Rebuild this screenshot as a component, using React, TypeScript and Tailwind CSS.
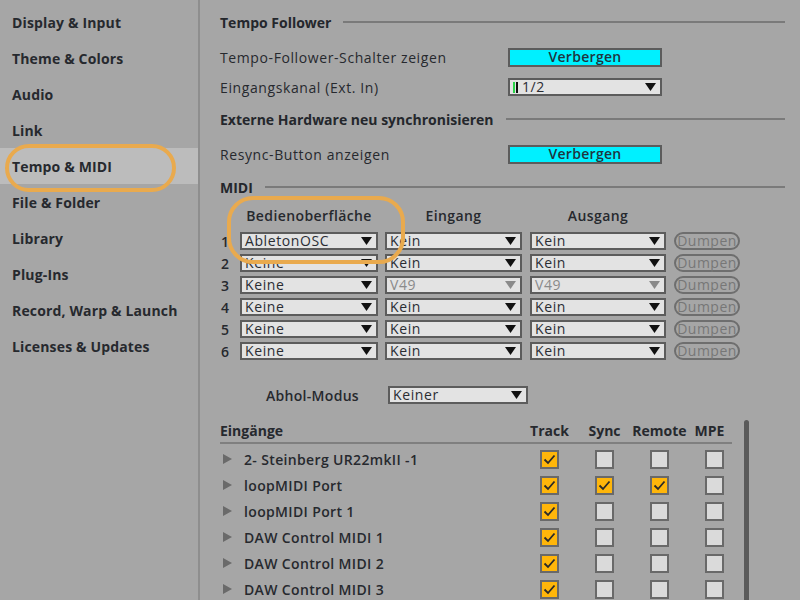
import React from "react";

const navItems = [
  "Display & Input",
  "Theme & Colors",
  "Audio",
  "Link",
  "Tempo & MIDI",
  "File & Folder",
  "Library",
  "Plug-Ins",
  "Record, Warp & Launch",
  "Licenses & Updates",
];

const midiRows = [
  { surface: "AbletonOSC", input: "Kein", output: "Kein", off: false },
  { surface: "Keine", input: "Kein", output: "Kein", off: false },
  { surface: "Keine", input: "V49", output: "V49", off: true },
  { surface: "Keine", input: "Kein", output: "Kein", off: false },
  { surface: "Keine", input: "Kein", output: "Kein", off: false },
  { surface: "Keine", input: "Kein", output: "Kein", off: false },
];

const ports = [
  { name: "2- Steinberg UR22mkII -1", checks: [true, false, false, false] },
  { name: "loopMIDI Port", checks: [true, true, true, false] },
  { name: "loopMIDI Port 1", checks: [true, false, false, false] },
  { name: "DAW Control MIDI 1", checks: [true, false, false, false] },
  { name: "DAW Control MIDI 2", checks: [true, false, false, false] },
  { name: "DAW Control MIDI 3", checks: [true, false, false, false] },
];

function Arrow({ dim }: { dim?: boolean }) {
  return (
    <svg width="11" height="8" viewBox="0 0 11 8" className="shrink-0">
      <polygon points="0,0 11,0 5.5,8" fill={dim ? "#8a8a8a" : "#111"} />
    </svg>
  );
}

function Select({ label, width, dim, children }: { label: string; width: string; dim?: boolean; children?: React.ReactNode }) {
  return (
    <div className={`${width} h-[18px] flex items-center justify-between bg-[#e3e3e3] border-2 border-[#5c5c5c] pl-[3px] pr-[4px]`}>
      <div className="flex items-center gap-[4px]">
        {children}
        <span className={`text-[14px] leading-none font-medium tracking-[0.6px] ${dim ? "text-[#8a8a8a]" : "text-[#2a2d33]"}`}>{label}</span>
      </div>
      <Arrow dim={dim} />
    </div>
  );
}

function CyanButton() {
  return (
    <div className="w-[154px] h-[19px] flex items-center justify-center bg-[#00f0ff] border-2 border-[#5c5c5c] text-[14px] leading-none text-[#1f3540] font-semibold tracking-[0.3px]">
      Verbergen
    </div>
  );
}

function SectionTitle({ title, h }: { title: string; h: string }) {
  return (
    <div className={`${h} flex items-center gap-[12px] pr-[15px]`}>
      <span className="font-bold text-[14px] text-[#24272c]">{title}</span>
      <div className="flex-1 h-[2px] bg-[#7a7a7a]" />
    </div>
  );
}

function Check({ on }: { on: boolean }) {
  return (
    <div className={`w-[19px] h-[19px] border-2 border-[#696969] flex items-center justify-center ${on ? "bg-[#ffb60a]" : "bg-[#dadada]"}`}>
      {on && (
        <svg width="13" height="11" viewBox="0 0 13 11">
          <polyline points="1.5,5.5 5,9 11.5,1.5" fill="none" stroke="#2a2a2a" strokeWidth="1.8" />
        </svg>
      )}
    </div>
  );
}

export default function App() {
  return (
    <div className="w-[800px] h-[600px] overflow-hidden flex bg-[#a6a6a6] text-[#26292e] font-['Open_Sans',sans-serif]">
      {/* sidebar */}
      <div className="w-[200px] shrink-0 border-r-2 border-[#8e8e8e] pt-[4px]">
        {navItems.map((item) => (
          <div
            key={item}
            className={`relative h-[36px] flex items-center pl-[12px] text-[14px] font-bold tracking-[0.15px] ${item === "Tempo & MIDI" ? "bg-[#bcbcbc]" : ""}`}
          >
            {item}
            {item === "Tempo & MIDI" && (
              <div className="absolute left-[5px] top-[-4px] w-[171px] h-[48px] rounded-[24px] border-[4px] border-[#e9aa4e]" />
            )}
          </div>
        ))}
      </div>

      {/* main */}
      <div className="flex-1 pl-[20px] text-[14px]">
        <SectionTitle title="Tempo Follower" h="h-[44px]" />
        <div className="h-[26px] flex items-center">
          <span className="w-[288px] font-medium tracking-[0.6px]">Tempo-Follower-Schalter zeigen</span>
          <CyanButton />
        </div>
        <div className="h-[34px] flex items-center">
          <span className="w-[288px] font-medium tracking-[0.6px]">Eingangskanal (Ext. In)</span>
          <Select label="1/2" width="w-[154px]">
            <div className="flex gap-[1px]">
              <span className="w-[2px] h-[11px] bg-[#2bd44a]" />
              <span className="w-[2px] h-[11px] bg-[#111]" />
            </div>
          </Select>
        </div>
        <SectionTitle title="Externe Hardware neu synchronisieren" h="h-[30px]" />
        <div className="h-[40px] flex items-center">
          <span className="w-[288px] font-medium tracking-[0.6px]">Resync-Button anzeigen</span>
          <CyanButton />
        </div>
        <SectionTitle title="MIDI" h="h-[26px]" />

        {/* control surfaces */}
        <div className="relative">
          <div className="h-[30px] flex items-center font-semibold tracking-[0.4px]">
            <span className="w-[20px]" />
            <span className="w-[138px] text-center">Bedienoberfläche</span>
            <span className="w-[7px]" />
            <span className="w-[137px] text-center">Eingang</span>
            <span className="w-[8px]" />
            <span className="w-[136px] text-center">Ausgang</span>
          </div>
          {midiRows.map((r, i) => (
            <div key={i} className="h-[22px] flex items-center">
              <span className="w-[20px] pl-[1px] font-semibold">{i + 1}</span>
              <Select label={r.surface} width="w-[138px]" />
              <span className="w-[7px]" />
              <Select label={r.input} width="w-[137px]" dim={r.off} />
              <span className="w-[8px]" />
              <Select label={r.output} width="w-[136px]" dim={r.off} />
              <div className="ml-[8px] w-[66px] h-[18px] rounded-full border-2 border-[#6e6e6e] flex items-center justify-center text-[14px] leading-none font-medium tracking-[0.5px] text-[#777777]">
                Dumpen
              </div>
            </div>
          ))}
          <div className="absolute left-[7px] top-[-4px] w-[178px] h-[68px] rounded-[26px] border-[4px] border-[#e9aa4e]" />
        </div>

        <div className="mt-[18px] h-[30px] flex items-center">
          <span className="w-[168px] pl-[46px] font-semibold tracking-[0.3px]">Abhol-Modus</span>
          <Select label="Keiner" width="w-[140px]" />
        </div>

        {/* ports */}
        <div className="flex mt-[8px]">
          <div className="w-[522px]">
            <div className="w-[512px] h-[26px] flex items-center border-b-2 border-[#7f7f7f] font-bold">
              <span className="w-[302px]">Eingänge</span>
              <span className="w-[55px] text-center">Track</span>
              <span className="w-[55px] text-center">Sync</span>
              <span className="w-[55px] text-center">Remote</span>
              <span className="w-[45px] text-center">MPE</span>
            </div>
            <div className="pt-[2px]">
              {ports.map((p) => (
                <div key={p.name} className="h-[26px] flex items-center">
                  <div className="w-[302px] flex items-center">
                    <svg width="9" height="10" viewBox="0 0 9 10" className="ml-[3px] mr-[12px]">
                      <polygon points="0,0 9,5 0,10" fill="#6a6a6a" />
                    </svg>
                    <span className="font-semibold tracking-[0.35px]">{p.name}</span>
                  </div>
                  {p.checks.map((c, j) => (
                    <div key={j} className="w-[55px] flex justify-center">
                      <Check on={c} />
                    </div>
                  ))}
                </div>
              ))}
            </div>
          </div>
          <div className="ml-[2px] mt-[2px] w-[5px] h-[200px] rounded-full bg-[#5a5a5a]" />
        </div>
      </div>
    </div>
  );
}
